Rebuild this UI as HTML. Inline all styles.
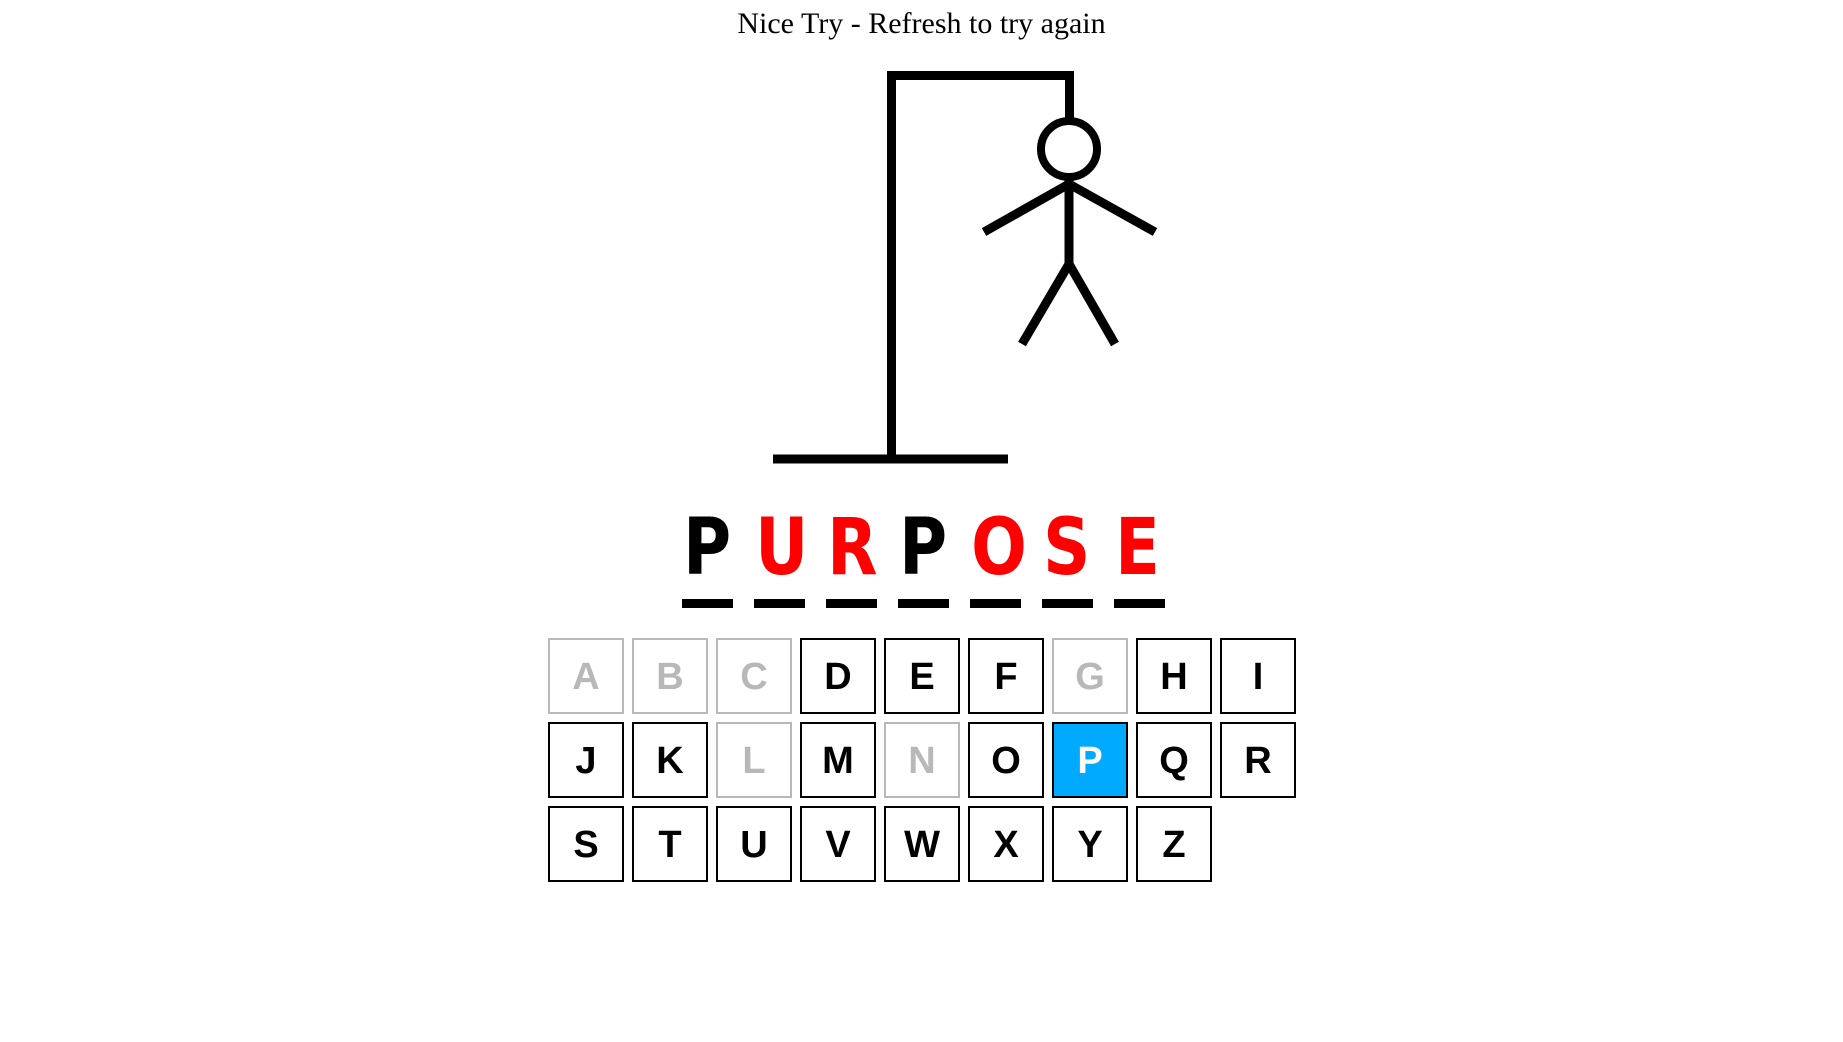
<!DOCTYPE html>
<html><head><meta charset="utf-8"><style>
html,body{margin:0;padding:0;background:#fff;width:1843px;height:1042px;overflow:hidden;position:relative}
.t{position:absolute;left:0;width:1843px;top:5px;text-align:center;font-family:"Liberation Serif",serif;font-size:30px;color:#000;line-height:38px}
.k{position:absolute;width:72px;height:72px;border:2px solid #000;font-family:"Liberation Sans",sans-serif;font-weight:bold;font-size:38px;line-height:74px;text-align:center;color:#000;background:#fff}
.d{border-color:#b8b8b8;color:#b8b8b8}
.p{background:#00aaff;color:#fff}
.l{position:absolute;width:51px;text-align:center;font-family:"DejaVu Sans",sans-serif;font-weight:bold;font-size:78px;line-height:78px;top:509px;transform:scaleX(0.84)}
.u{position:absolute;width:51px;height:9px;background:#000;top:599px}
</style></head><body>
<div class="t">Nice Try - Refresh to try again</div>
<svg width="1843" height="1042" style="position:absolute;left:0;top:0">
<g stroke="#000" stroke-width="9" fill="none">
<path d="M891.5 459 V75.5 H1069.5 V120"/>
<path d="M773 459 H1008"/>
<circle cx="1069" cy="149" r="28" stroke-width="8"/>
<path d="M1069 177 V264"/>
<path d="M984 232 L1069 184 L1155 232"/>
<path d="M1022 344 L1069 264 L1115 344"/>
</g>
</svg>
<div class="l" style="left:679px;color:#000">P</div>
<div class="l" style="left:751px;color:#f00">U</div>
<div class="l" style="left:823px;color:#f00">R</div>
<div class="l" style="left:895px;color:#000">P</div>
<div class="l" style="left:967px;color:#f00">O</div>
<div class="l" style="left:1039px;color:#f00">S</div>
<div class="l" style="left:1111px;color:#f00">E</div>
<div class="u" style="left:682px"></div><div class="u" style="left:754px"></div><div class="u" style="left:826px"></div><div class="u" style="left:898px"></div><div class="u" style="left:970px"></div><div class="u" style="left:1042px"></div><div class="u" style="left:1114px"></div>

<div class="k d" style="left:548px;top:638px">A</div>
<div class="k d" style="left:632px;top:638px">B</div>
<div class="k d" style="left:716px;top:638px">C</div>
<div class="k" style="left:800px;top:638px">D</div>
<div class="k" style="left:884px;top:638px">E</div>
<div class="k" style="left:968px;top:638px">F</div>
<div class="k d" style="left:1052px;top:638px">G</div>
<div class="k" style="left:1136px;top:638px">H</div>
<div class="k" style="left:1220px;top:638px">I</div>

<div class="k" style="left:548px;top:722px">J</div>
<div class="k" style="left:632px;top:722px">K</div>
<div class="k d" style="left:716px;top:722px">L</div>
<div class="k" style="left:800px;top:722px">M</div>
<div class="k d" style="left:884px;top:722px">N</div>
<div class="k" style="left:968px;top:722px">O</div>
<div class="k p" style="left:1052px;top:722px">P</div>
<div class="k" style="left:1136px;top:722px">Q</div>
<div class="k" style="left:1220px;top:722px">R</div>

<div class="k" style="left:548px;top:806px">S</div>
<div class="k" style="left:632px;top:806px">T</div>
<div class="k" style="left:716px;top:806px">U</div>
<div class="k" style="left:800px;top:806px">V</div>
<div class="k" style="left:884px;top:806px">W</div>
<div class="k" style="left:968px;top:806px">X</div>
<div class="k" style="left:1052px;top:806px">Y</div>
<div class="k" style="left:1136px;top:806px">Z</div>
</body></html>
